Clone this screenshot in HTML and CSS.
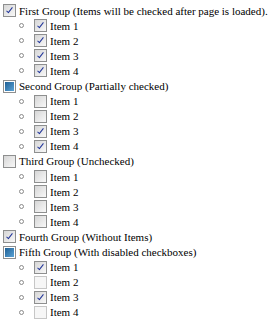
FILE: index.html
```html
<!DOCTYPE html>
<html lang="en">
<head>
    <meta charset="UTF-8">
    <title>Checkbox Groups</title>
    <link rel="stylesheet" href="styles.css">
</head>
<body>
    <ul class="tree">
        <li class="group">
            <div class="row"><span class="box checked"></span><span class="label">First Group (Items will be checked after page is loaded).</span></div>
            <ul class="items">
                <li class="row"><span class="box checked"></span><span class="label">Item 1</span></li>
                <li class="row"><span class="box checked"></span><span class="label">Item 2</span></li>
                <li class="row"><span class="box checked"></span><span class="label">Item 3</span></li>
                <li class="row"><span class="box checked"></span><span class="label">Item 4</span></li>
            </ul>
        </li>
        <li class="group">
            <div class="row"><span class="box partial"></span><span class="label">Second Group (Partially checked)</span></div>
            <ul class="items">
                <li class="row"><span class="box"></span><span class="label">Item 1</span></li>
                <li class="row"><span class="box"></span><span class="label">Item 2</span></li>
                <li class="row"><span class="box checked"></span><span class="label">Item 3</span></li>
                <li class="row"><span class="box checked"></span><span class="label">Item 4</span></li>
            </ul>
        </li>
        <li class="group">
            <div class="row"><span class="box"></span><span class="label">Third Group (Unchecked)</span></div>
            <ul class="items">
                <li class="row"><span class="box"></span><span class="label">Item 1</span></li>
                <li class="row"><span class="box"></span><span class="label">Item 2</span></li>
                <li class="row"><span class="box"></span><span class="label">Item 3</span></li>
                <li class="row"><span class="box"></span><span class="label">Item 4</span></li>
            </ul>
        </li>
        <li class="group">
            <div class="row"><span class="box checked"></span><span class="label">Fourth Group (Without Items)</span></div>
        </li>
        <li class="group">
            <div class="row"><span class="box partial"></span><span class="label">Fifth Group (With disabled checkboxes)</span></div>
            <ul class="items">
                <li class="row"><span class="box checked"></span><span class="label">Item 1</span></li>
                <li class="row"><span class="box disabled"></span><span class="label">Item 2</span></li>
                <li class="row"><span class="box checked"></span><span class="label">Item 3</span></li>
                <li class="row"><span class="box disabled"></span><span class="label">Item 4</span></li>
            </ul>
        </li>
    </ul>
</body>
</html>
```

FILE: styles.css
```css
body {
    margin: 0;
    padding: 3px 0 0 0;
    background: #fff;
    color: #000;
    font-family: "Liberation Serif", serif;
    font-size: 11px;
}
.tree,
.items {
    list-style: none;
    margin: 0;
    padding: 0;
}
.label {
    line-height: 14px;
}
.row {
    display: flex;
    align-items: center;
    height: 15.1px;
    white-space: nowrap;
}
.group > .row {
    padding-left: 3px;
}
.items .row {
    padding-left: 19px;
}
/* circle bullet */
.items .row:before {
    content: "";
    width: 3px;
    height: 3px;
    border: 1px solid #8a8a8a;
    border-radius: 50%;
    margin-right: 10px;
}
.box {
    position: relative;
    width: 11px;
    height: 11px;
    border: 1px solid #8e8f8f;
    background: linear-gradient(135deg, #d6d6d6, #f8f8f8);
    margin-right: 3px;
    flex: none;
}
/* check mark */
.box.checked:after {
    content: "";
    position: absolute;
    left: 4px;
    top: 1px;
    width: 2px;
    height: 6px;
    border: solid #22369a;
    border-width: 0 1.5px 1.5px 0;
    transform: rotate(38deg);
}
.box.partial {
    background: #fff;
}
.box.partial:after {
    content: "";
    position: absolute;
    left: 1px;
    top: 1px;
    width: 9px;
    height: 9px;
    background: linear-gradient(135deg, #1f5f94, #5aa3d6);
}
.box.disabled {
    border-color: #c6c6c6;
    background: #f6f6f6;
}
```
